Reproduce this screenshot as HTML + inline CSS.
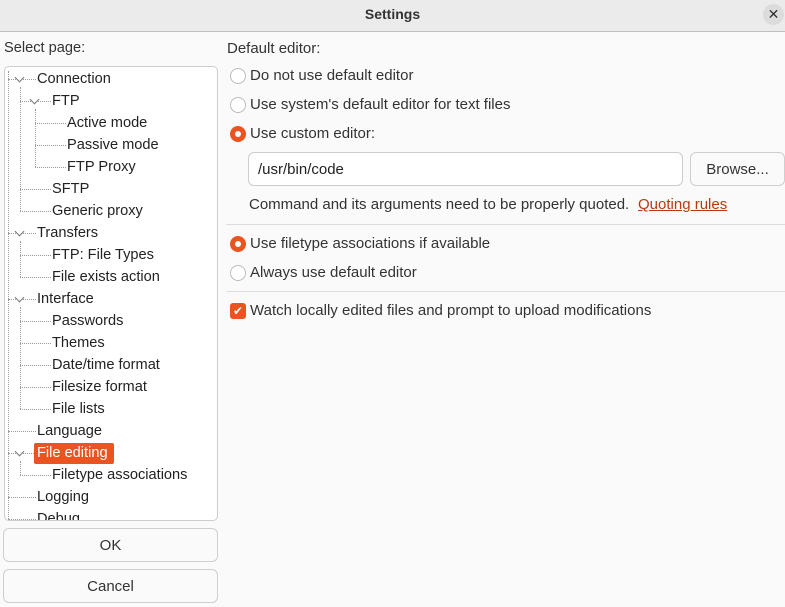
<!DOCTYPE html>
<html><head><style>
*{margin:0;padding:0;box-sizing:border-box}
body{width:785px;height:607px;background:#fafafa;font-family:"Liberation Sans",sans-serif;font-size:15px;color:#333;position:relative;overflow:hidden}
.a{position:absolute;white-space:nowrap}
.t{position:absolute;white-space:nowrap;line-height:20px;color:#222;font-size:14.6px}
.h{position:absolute;border-top:1px dotted #999;height:0}
.v{position:absolute;border-left:1px dotted #999;width:0}
.ex{position:absolute;width:7px;height:7px;border-right:1px solid #777;border-bottom:1px solid #777;transform:rotate(45deg)}
.r{position:absolute;width:16px;height:16px;border-radius:50%;border:1px solid #bbb;background:#fff}
.rs{position:absolute;width:16px;height:16px;border-radius:50%;background:#e95420}
.rs:after{content:"";position:absolute;left:5px;top:5px;width:6px;height:6px;border-radius:50%;background:#fff}
.btn{position:absolute;border:1px solid #cfcfcf;border-radius:6px;background:#fafafa;text-align:center;color:#333}
.sep{position:absolute;left:226px;right:0;height:1px;background:#ddd}
</style></head><body>
<div class="a" style="left:0;top:0;width:785px;height:32px;background:#ebebeb;border-bottom:1px solid #c0c0c0"></div>
<div class="a" style="left:0;width:785px;top:6px;text-align:center;font-weight:bold;font-size:14px;color:#333">Settings</div>
<div class="a" style="left:763px;top:4px;width:21px;height:21px;border-radius:50%;background:#dcdcdc;text-align:center;line-height:21px;font-size:14px;color:#333">✕</div>

<div class="a" style="left:4px;top:40px;font-size:14.6px">Select page:</div>
<div class="a" style="left:4px;top:66px;width:214px;height:455px;border:1px solid #cdcdcd;border-radius:5px;background:#fff;overflow:hidden">
<div style="position:relative;left:-4px;top:-66px;width:214px;height:600px">
<div class="v" style="left:7px;top:70px;height:452px"></div>
<div class="v" style="left:19px;top:86px;height:124px"></div>
<div class="v" style="left:34px;top:108px;height:58px"></div>
<div class="v" style="left:19px;top:240px;height:36px"></div>
<div class="v" style="left:19px;top:306px;height:102px"></div>
<div class="v" style="left:19px;top:460px;height:14px"></div>
<div class="h" style="left:7px;top:78px;width:28px"></div>
<div class="h" style="left:19px;top:100px;width:31px"></div>
<div class="h" style="left:34px;top:122px;width:31px"></div>
<div class="h" style="left:34px;top:144px;width:31px"></div>
<div class="h" style="left:34px;top:166px;width:31px"></div>
<div class="h" style="left:19px;top:188px;width:31px"></div>
<div class="h" style="left:19px;top:210px;width:31px"></div>
<div class="h" style="left:7px;top:232px;width:28px"></div>
<div class="h" style="left:19px;top:254px;width:31px"></div>
<div class="h" style="left:19px;top:276px;width:31px"></div>
<div class="h" style="left:7px;top:298px;width:28px"></div>
<div class="h" style="left:19px;top:320px;width:31px"></div>
<div class="h" style="left:19px;top:342px;width:31px"></div>
<div class="h" style="left:19px;top:364px;width:31px"></div>
<div class="h" style="left:19px;top:386px;width:31px"></div>
<div class="h" style="left:19px;top:408px;width:31px"></div>
<div class="h" style="left:7px;top:430px;width:28px"></div>
<div class="h" style="left:7px;top:452px;width:26px"></div>
<div class="h" style="left:19px;top:474px;width:31px"></div>
<div class="h" style="left:7px;top:496px;width:28px"></div>
<div class="h" style="left:7px;top:518px;width:28px"></div>
<div class="ex" style="left:15px;top:73px;background:#fff"></div>
<div class="ex" style="left:30px;top:95px;background:#fff"></div>
<div class="ex" style="left:15px;top:227px;background:#fff"></div>
<div class="ex" style="left:15px;top:293px;background:#fff"></div>
<div class="ex" style="left:15px;top:447px;background:#fff"></div>
<div class="a" style="left:33px;top:442px;width:80px;height:21px;background:#e95420;border-radius:2px"></div>
<div class="t" style="left:36px;top:68px">Connection</div>
<div class="t" style="left:51px;top:90px">FTP</div>
<div class="t" style="left:66px;top:112px">Active mode</div>
<div class="t" style="left:66px;top:134px">Passive mode</div>
<div class="t" style="left:66px;top:156px">FTP Proxy</div>
<div class="t" style="left:51px;top:178px">SFTP</div>
<div class="t" style="left:51px;top:200px">Generic proxy</div>
<div class="t" style="left:36px;top:222px">Transfers</div>
<div class="t" style="left:51px;top:244px">FTP: File Types</div>
<div class="t" style="left:51px;top:266px">File exists action</div>
<div class="t" style="left:36px;top:288px">Interface</div>
<div class="t" style="left:51px;top:310px">Passwords</div>
<div class="t" style="left:51px;top:332px">Themes</div>
<div class="t" style="left:51px;top:354px">Date/time format</div>
<div class="t" style="left:51px;top:376px">Filesize format</div>
<div class="t" style="left:51px;top:398px">File lists</div>
<div class="t" style="left:36px;top:420px">Language</div>
<div class="t" style="left:36px;top:442px;color:#fff">File editing</div>
<div class="t" style="left:51px;top:464px">Filetype associations</div>
<div class="t" style="left:36px;top:486px">Logging</div>
<div class="t" style="left:36px;top:508px">Debug</div>
</div></div>
<div class="btn" style="left:3px;top:528px;width:215px;height:34px;line-height:33px">OK</div>
<div class="btn" style="left:3px;top:569px;width:215px;height:34px;line-height:33px">Cancel</div>

<div class="a" style="left:227px;top:40px">Default editor:</div>
<div class="r" style="left:230px;top:68px"></div><div class="a" style="left:250px;top:67px">Do not use default editor</div>
<div class="r" style="left:230px;top:97px"></div><div class="a" style="left:250px;top:96px">Use system's default editor for text files</div>
<div class="rs" style="left:230px;top:126px"></div><div class="a" style="left:250px;top:125px">Use custom editor:</div>
<div class="a" style="left:248px;top:152px;width:435px;height:34px;border:1px solid #cdcdcd;border-radius:6px;background:#fff;padding:8px 9px;color:#222">/usr/bin/code</div>
<div class="btn" style="left:690px;top:152px;width:95px;height:34px;line-height:33px">Browse...</div>
<div class="a" style="left:249px;top:196px">Command and its arguments need to be properly quoted.</div>
<div class="a" style="left:638px;top:196px;color:#b83a12;text-decoration:underline">Quoting rules</div>
<div class="sep" style="top:224px"></div>
<div class="rs" style="left:230px;top:236px"></div><div class="a" style="left:250px;top:235px">Use filetype associations if available</div>
<div class="r" style="left:230px;top:265px"></div><div class="a" style="left:250px;top:264px">Always use default editor</div>
<div class="sep" style="top:291px"></div>
<div class="a" style="left:230px;top:303px;width:16px;height:16px;border-radius:3px;background:#e95420;color:#fff;font-size:12px;line-height:16px;text-align:center">✔</div>
<div class="a" style="left:250px;top:302px">Watch locally edited files and prompt to upload modifications</div>
</body></html>
